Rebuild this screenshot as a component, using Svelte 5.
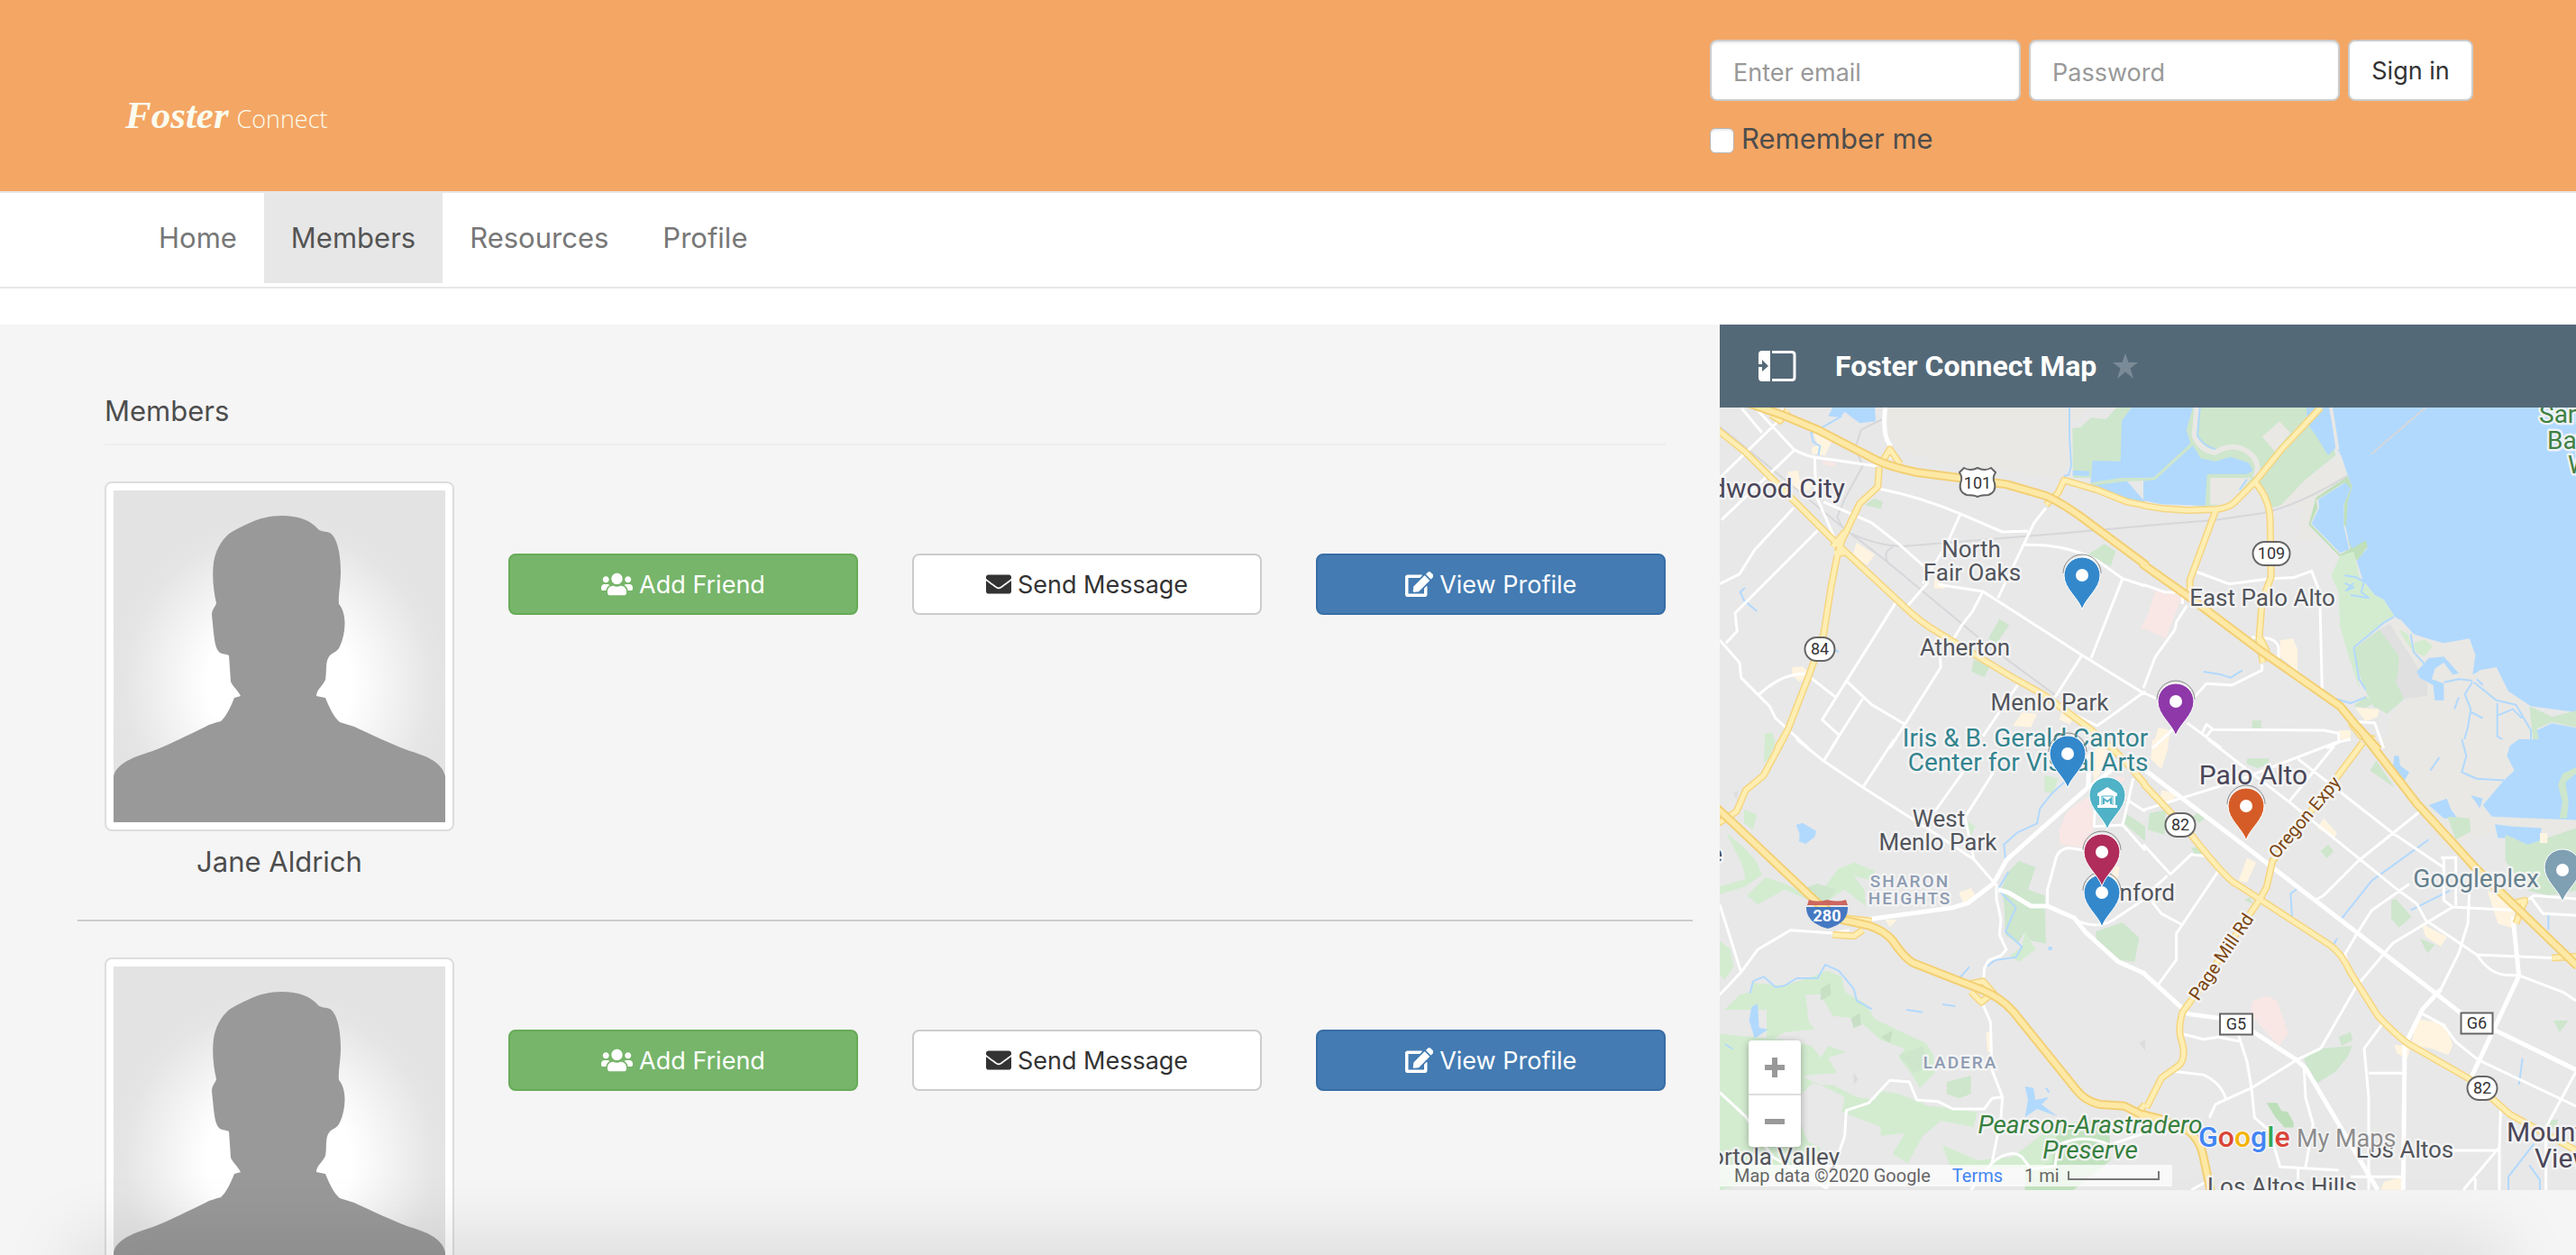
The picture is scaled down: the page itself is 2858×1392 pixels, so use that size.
<script lang="ts">
	type Tile = {
		transform: string;
		areas: { fill: string; d: string }[];
		river?: string;
		creeks: string;
		rails: string;
		minor: string;
		wide?: string;
		major: string;
		highway: string;
	};

	let email = $state('');
	let password = $state('');
	let remember = $state(false);

	const links = ['Home', 'Members', 'Resources', 'Profile'];
	const members = [{ name: 'Jane Aldrich' }, { name: '' }];

	const land = '#e9e8e4';
	const water = '#b1d9fe';
	const park = '#cde6cc';
	const grass = '#d3ecd0';
	const shop = '#fef4e0';
	const campus = '#f8e7e5';

	// The map is stored as four vector tiles, each with its own local units
	const tiles: Tile[] = [
		{
			transform: 'translate(-8 -102) scale(0.33333)',
			areas: [
				{ fill: land, d: 'M580 306H1185L1190 500 1140 540 950 510 760 490 640 450 580 400Z' },
				{ fill: park, d: 'M1198 375 1225 372 1260 340 1310 345 1345 306H1440V540H1200Z' },
				{ fill: land, d: 'M1198 306H1250L1205 350Z' },
				{ fill: water, d: 'M1395 306H1440V540H1370L1440 620V630L1380 615 1300 585 1258 560 1265 483 1358 485 1362 350Z' },
				{ fill: park, d: 'M1258 556 1360 540H1440V550L1370 552 1262 566Z' },
				{ fill: water, d: 'M1200 515 1255 518 1252 534 1198 532Z' },
				{ fill: water, d: 'M400 306H540L543 352 490 358 465 340 440 320 425 338 385 335Z' },
				{ fill: shop, d: 'M335 390 400 410 375 465 330 460V440L350 430Z' },
				{ fill: shop, d: 'M250 520 285 515 290 545 330 550 325 580 290 590 255 560Z' },
				{ fill: shop, d: 'M480 755 540 795 515 830 465 800Z' },
				{ fill: shop, d: 'M738 875 780 900 770 908H738Z' },
				{ fill: shop, d: 'M265 1170 300 1168 325 1190 290 1220 265 1195Z' },
				{ fill: shop, d: 'M1030 1320 1080 1325 1060 1370 1000 1365ZM1160 1320 1200 1340 1190 1360 1155 1345Z' },
				{ fill: campus, d: 'M365 480 412 492 405 503 370 495Z' },
				{ fill: campus, d: 'M1440 1005 1425 1040 1440 1046Z' },
				{ fill: park, d: 'M540 608 567 620 560 643 505 630ZM955 1010 988 1030 945 1090 918 1075ZM870 1145 925 1165 905 1203 862 1185ZM1305 760 1342 785 1325 835 1250 795Z' },
				{ fill: grass, d: 'M175 1390 200 1388 210 1440H172Z' }
			],
			creeks: 'M1188 306V400L1194 500 1185 530 1170 534M430 335 360 375 328 390 335 420 358 435 352 465M108 906 92 920 105 948 148 984M408 1112 420 1120',
			rails: 'M24 370 160 480 440 710 570 810 920 1100 1150 1270M460 725Q560 770 640 767L1100 730 1440 700M565 345 495 380 475 440 500 500 440 610 415 670 430 700M600 770Q560 790 590 830',
			minor: 'M95 306 165 390M150 315 270 445Q310 468 350 473L540 500 555 495M215 355 24 540M270 450 30 680M340 475 345 600 410 750M370 620 530 690 620 760 710 840 715 890 650 965M270 640 140 780 90 860 24 893M350 715 75 990 82 1050 45 1090M24 1080 90 1155 95 1205 190 1300 210 1340 320 1440M150 1265Q230 1190 310 1192L410 1270M610 955 440 1225 365 1345 420 1395M500 1275 395 1440M445 1215 530 1295 640 1360M550 575Q700 605 825 660L965 720 1050 717M825 660 780 760 700 890M750 895 900 918 1230 1130 1440 1260M900 918 865 985 830 1030 800 1080M1110 640 1070 690 950 940M1040 763Q1180 760 1280 815L1365 875 1440 900M1365 875 1260 1140M1230 1130 1140 1270M755 1110 760 1170 590 1440M1015 1230 900 1400M1130 1290 1280 1365 1330 1330 1440 1250M235 306 225 320',
			wide: 'M575 306Q565 400 590 430L598 475',
			major: 'M10 375 110 455 420 765 640 970Q690 1020 760 1060L1000 1205 1100 1260 1250 1370 1330 1440M555 505 550 570 490 625 430 750 415 800 395 900 370 1060 320 1200 250 1380 215 1440M1110 630 1150 590 1170 548 1280 580 1380 620 1440 632M195 330 225 350 250 315M560 495 590 445 625 495M400 770 440 720M405 790 440 790',
			highway: 'M120 292 230 330 350 380 540 478Q580 500 680 522L820 540 980 562 1110 600Q1160 622 1220 665L1445 832'
		},
		{
			transform: 'translate(470 -102) scale(0.33333)',
			areas: [
				{ fill: park, d: 'M0 306H600L640 465 540 545 455 635 430 640 350 600 210 640 0 600Z' },
				{ fill: water, d: 'M0 306H165L143 380 157 425 35 538 0 540Z' },
				{ fill: water, d: 'M0 551 40 546 165 432 190 475 240 485 290 470 350 490 365 515 345 528H212L206 632 60 628 0 615Z' },
				{ fill: land, d: 'M222 540H360L290 625 222 630Z' },
				{ fill: land, d: 'M395 403 453 352 490 390 437 452Z' },
				{ fill: '#e8e8e8', d: 'M372 560 430 640 460 630 560 610 580 750 640 790 620 860 500 860 222 640 300 630Z' },
				{ fill: land, d: 'M455 635 540 545 655 465 690 560 575 610 550 700 590 745 515 750 530 640Z' },
				{ fill: water, d: 'M612 306H625L645 440 660 470 680 530 695 570 680 620 672 700 690 780 740 750 745 775 710 815 730 880 770 930 800 945 835 1000 855 1015 890 1060 1000 1090 1085 1075 1105 1130 1090 1195 1175 1170 1215 1250 1290 1300 1440 1320V306Z' },
				{ fill: water, d: 'M600 306H620L640 440 615 465 575 400 550 365ZM543 306H575L543 345Z' },
				{ fill: '#bfe0bb', d: 'M695 570 680 620 675 700H667L668 630 690 575 670 555 575 615 580 640 557 693 655 795 690 775 678 740 695 775 740 748 747 768 712 815 690 790 655 803 550 697 575 605 680 535Z' },
				{ fill: water, d: 'M672 556 583 612 585 640 560 692 655 790 685 778 667 700V630L690 575Z' },
				{ fill: land, d: 'M618 306 645 445H652L634 330 630 306Z' },
				{ fill: grass, d: 'M655 800 700 785 720 870 770 930 800 945 835 1000 800 1020 700 1105 720 1240 740 1275 715 1230 685 1140 655 1035 650 920 625 865Z' },
				{ fill: '#dfe0df', d: 'M820 1025 785 1045 850 1130 840 1220 868 1275 945 1265V1225L900 1150Z' },
				{ fill: park, d: 'M785 1045 850 1130 848 1185 840 1220 868 1275 812 1325 765 1300 735 1240 715 1180 700 1110Z' },
				{ fill: land, d: 'M820 1025 855 1010 900 1060 1000 1095 1085 1075 1105 1130 1095 1200 1120 1180 1175 1170 1215 1260 1270 1290 1300 1350V1440H815L820 1330 870 1280 945 1265V1225L900 1150Z' },
				{ fill: grass, d: 'M850 1045 880 1060 900 1120 870 1080ZM900 1090 935 1078 963 1100 935 1135 905 1120Z' },
				{ fill: water, d: 'M910 1185 950 1140 1000 1135 1050 1190 1030 1195 1000 1155 970 1175 960 1210 1000 1225V1280H970L965 1230 920 1205Z' },
				{ fill: park, d: 'M1285 1300 1360 1335 1440 1315V1370L1360 1352 1310 1375 1320 1440H1300Z' },
				{ fill: water, d: 'M1310 1380 1360 1357 1440 1372V1440H1322Z' },
				{ fill: campus, d: 'M40 915 130 930 75 1075 0 1040Z' },
				{ fill: shop, d: 'M455 1080 498 1075 513 1110V1185L455 1135ZM705 1305 785 1310 780 1335 740 1350ZM50 1370 90 1380 80 1440H30ZM650 1380H690V1410H650Z' },
				{ fill: park, d: 'M362 1348H392V1373H362ZM700 1300 740 1265 765 1290 740 1305Z' }
			],
			river: 'M178 306 170 400Q190 450 240 455 300 420 350 455 395 490 372 540',
			creeks: 'M188 306 180 400Q200 435 240 445M200 1185 260 1195 290 1205 330 1180M640 1275 690 1290 740 1270M835 1002 800 1022 700 1105 718 1210 740 1245M890 1060 900 1120 945 1170M670 865 705 870 735 885 725 920 750 940 690 930M670 890 700 905 675 915 700 890M345 545 320 580M1000 1220 1050 1210 1095 1215M1095 1220 1070 1260 1090 1310 1080 1370 1060 1440M1100 1220 1175 1280 1240 1295 1290 1380 1290 1440M1178 1290V1400L1240 1440M1092 1320 1130 1340M1130 1230 1110 1210M1180 1330 1230 1310 1260 1340M1035 1310 1050 1270',
			rails: 'M0 700 240 680 400 657Q520 630 680 532M760 460 940 306',
			minor: 'M175 852 285 893 425 875 500 872 560 850 587 920 595 1250M360 1070 420 1075Q450 1085 450 1110V1140M395 1160V1180L295 1230 210 1225 165 1275M145 965 110 1020 105 1045 40 1135 0 1240M0 895 70 920 130 922V960M0 1255 45 1275M145 1355 260 1440M195 1390 210 1360 230 1375 210 1400M230 1378 600 1380 650 1390V1420L610 1440M100 1375 30 1440M680 1350 770 1355 800 1440',
			major: 'M0 632 70 643 150 648 240 645Q290 640 310 615L370 555 460 445 590 306M372 555Q420 610 422 680L425 870 395 950 385 1080 398 1155M240 650 155 880V930M390 1075 412 1120M690 1355 725 1400 770 1410',
			highway: 'M-5 825 150 935 390 1115 655 1300 700 1355 782 1445'
		},
		{
			transform: 'translate(-8 368) scale(0.33333)',
			areas: [
				{ fill: grass, d: 'M175 0H210L190 60 170 80ZM105 235 148 250 135 300 105 280ZM45 310 110 365 145 405 165 450 110 490 24 515V490L110 465 100 420Z' },
				{ fill: grass, d: 'M115 520 175 460 240 480 300 510 370 495 420 430 475 410 540 440 535 470 470 455 505 500 510 555 440 500 370 545 310 530 240 500 150 550Z' },
				{ fill: park, d: 'M305 495 350 480 410 500 380 545 330 530Z' },
				{ fill: park, d: 'M1020 405 1075 425 1050 500 1105 520 1110 680 1060 670 1040 640 1015 680 975 650 970 540 960 500 985 440Z' },
				{ fill: grass, d: 'M1040 640 1075 700 1020 740 990 720 1030 690ZM1105 120 1150 130 1135 180 1105 175ZM840 270 875 290 860 320Z' },
				{ fill: grass, d: 'M24 670 60 700 70 760 40 800 24 780Z' },
				{ fill: grass, d: 'M130 810 240 820 330 790 380 770 430 790 440 840 510 880 540 930 620 970 710 1010 735 1050 740 1110 690 1160 660 1110 620 1060 640 1030 560 1000 480 930 400 920 360 850 310 850 320 940 340 965 240 975 180 1010V900H40L90 850 130 840Z' },
				{ fill: grass, d: 'M24 980 240 1000 330 1020 360 1060 385 1020 445 1040 385 1060 415 1110 300 1120 350 1150 400 1150 480 1190 540 1200 560 1170 620 1180 720 1220 880 1240 870 1290 760 1270 700 1320 650 1410 600 1380 640 1310 560 1320V1290L430 1240 440 1190 340 1140 270 1200 300 1300 320 1340 360 1360 340 1420 24 1500Z' },
				{ fill: park, d: 'M780 1140 860 1120V1180L820 1195 780 1180ZM620 1050 700 1020 720 1090 670 1110Z' },
				{ fill: grass, d: 'M765 1350 880 1400 1000 1390 1140 1280 1320 1260 1325 1400 1200 1500H1040V1430L790 1420Z' },
				{ fill: '#c2e2bf', d: 'M1150 1290 1320 1262 1325 1400 1200 1500H1040V1430L1130 1410Z' },
				{ fill: park, d: 'M1275 640 1365 610 1420 660 1405 740 1360 735 1280 680ZM1380 250 1440 290V340L1370 280Z' },
				{ fill: '#c8dfc6', d: 'M360 830 390 810 395 850 360 870ZM460 930 490 910 495 950 470 960ZM560 990 600 970 590 1010Z' },
				{ fill: '#dcdcdc', d: 'M470 1110 485 1130 470 1150ZM1420 1010 1440 1000V1035ZM70 180 85 170 80 200Z' },
				{ fill: water, d: 'M278 285 300 278 345 305 340 325 310 348 288 340 290 315ZM130 890 150 880 155 960 185 965 140 995 122 935ZM1040 1155 1068 1160 1075 1200 1120 1190 1095 1215 1148 1255 1080 1230 1040 1258 1050 1200ZM40 1010 70 1030 65 1032 42 1018ZM1118 690 1130 690V702H1118Z' },
				{ fill: campus, d: 'M1180 240 1250 190 1275 280 1235 360 1155 350V300ZM1340 120 1375 130 1355 150Z' },
				{ fill: shop, d: 'M1260 40 1300 20 1330 60 1270 140ZM820 510 860 495 875 520 835 545ZM575 600H615L590 625ZM910 975H925L930 1040H915ZM1340 420 1355 425 1345 480 1330 450Z' }
			],
			creeks: 'M125 845 135 805 170 790 210 825 240 820 280 795 350 795 375 750 420 770 470 830 480 870 530 898M1185 130 1130 180 1090 230 1080 280 1015 310 970 350 975 400M985 440 950 500 1010 560 975 640 1030 690 1010 725 940 735 915 755M645 900 700 908M765 882 808 888M855 757 822 795M1110 1160 1120 1175',
			rails: '',
			minor: 'M280 0 370 72 500 160 720 300 870 400 940 480M415 0 370 72M605 0 500 160M840 100 740 240M935 110 840 260 870 400M945 480V530L960 600 955 650 978 700 960 720 920 735 905 760 900 825M890 860 925 940 930 1100 965 1190 960 1260 930 1410 860 1500M1115 555V500L1145 390Q1160 360 1190 362L1240 370M1205 600Q1290 640 1350 590L1440 530M24 850 95 775 150 700 260 635 400 645 455 635M24 550 95 775M24 1175 110 1255 200 1390 380 1495M380 1495 440 1320 445 1235 520 1210 590 1135 655 1140 680 1200 750 1205 800 1230 905 1230 930 1195 965 1190M930 1410Q990 1360 1030 1390L1060 1430 1140 1420 1150 1350Q1240 1310 1320 1350L1440 1310M1275 180 1270 290 1365 285 1440 370M1400 130 1385 200 1365 285M1385 205 1440 240',
			wide: 'M475 605 800 560 850 545 935 480 980 400 1250 160 1255 50M950 500 985 510 1060 555 1115 555 1205 595 1240 640 1350 740 1440 780M1255 160 1380 60',
			major: 'M240-10 170 120 110 170 80 240 50 260 10 285M1330 30 1370 70 1440 150M440 595 530 605M400 650 470 655 500 635M850 815 900 805 940 850M860 840 895 875 925 850M1400 1260 1440 1215',
			highway: 'M10 225 70 280 350 545 430 600 520 620Q570 635 600 670 640 730 670 745L900 835Q960 860 1000 905L1210 1165Q1240 1205 1290 1215L1370 1220 1445 1258'
		},
		{
			transform: 'translate(470 368) scale(0.33333 0.36483)',
			areas: [
				{ fill: land, d: 'M770 0H1440V290L1200 270 1000 330 900 200Z' },
				{ fill: water, d: 'M1220 20 1250 0H1440V245L1160 235 1130 200 1200 125 1235 95 1210 50Z' },
				{ fill: water, d: 'M1170 258 1230 265 1325 270 1320 310 1255 338 1235 300 1180 300ZM835 50 850 50 855 80 885 100 870 125 830 90ZM950 200 1010 180 1025 215 1050 245 1000 240ZM1090 170 1130 180 1120 210Z' },
				{ fill: park, d: 'M1205 290 1280 320 1440 270V460L1350 475 1280 460 1205 370ZM1440 85 1395 105 1380 140 1395 190 1385 240H1410L1415 190 1405 130 1440 105Z' },
				{ fill: park, d: 'M345 58H420L415 75 380 88 345 75ZM20 225 75 215 70 290 15 275ZM775 65 835 145 755 95ZM165 235 190 215 210 235 185 255ZM160 330 190 325 210 350H170ZM590 340 615 320 633 340 612 362ZM825 490 840 485 893 540 850 572 825 545ZM535 970 590 940 695 932 680 965 640 1010 580 1045 550 1010ZM650 905 690 890 697 915 660 932ZM1365 855 1415 855 1385 890ZM920 605 970 625 945 650ZM1012 235 1085 240 1090 280 1040 305ZM335 490 355 480 365 500ZM1340 1160 1380 1155 1370 1190Z' },
				{ fill: '#bcdfba', d: 'M410 1105H445L460 1130 480 1132 500 1165V1180H470L440 1150Z' },
				{ fill: campus, d: 'M365 795 410 780 445 795 483 895 450 932 355 835Z' },
				{ fill: shop, d: 'M910 850 1005 865 1030 930 1015 960 960 940 890 930ZM835 930H890L880 970 845 955ZM925 560 1010 600 990 630 940 600ZM1145 460 1240 500 1230 575 1180 560ZM600 240 645 285 635 300 580 270ZM345 360 375 375 345 435 317 430ZM30 0 85 20 60 90 25 60ZM60 155 115 165 90 195 55 185ZM800 1345 865 1330V1370H790ZM1320 285H1345V315H1320Z' }
			],
			creeks: 'M510 455 490 470 495 540M950 305 760 430 660 545M1020 460 890 520M645 605 630 630M1262 970 1250 1050M1300 1230 1240 1300 1215 1330V1370M1285 1295 1320 1340V1370M1060 0 1075 50 1060 100 1110 120 1200 125M985 55 955 95M1348 530V580',
			rails: '',
			minor: 'M215 0 485 190 850 460 910 500 940 550 1110 655 1360 665M0 215 300 130 640 10 690 0M635 20 485 190M515 60 830 285 1000 390M920 220 715 370 600 475 570 490M885 440 760 520 705 600 670 655 685 690M210 355 160 350 90 410 0 320M0 480 80 415M0 460 60 530 125 562M250 400 110 590V670L50 745M125 895 200 912 250 905 320 918M315 895 345 980 360 1060 370 1150 420 1190 455 1300 650 1310M105 1010 200 1020Q260 1045 275 1095M220 1150 240 1110 360 1060 510 975 590 940 710 750 830 620 1030 510 1240 520M1000 360V490L1030 510M1040 355V505M990 360H1040M1085 470 1080 560 1050 650 990 760M800 860 735 940 750 1090V1370M750 1015H865M535 1000 540 1090 565 1170 540 1300M930 835 1000 870 1040 920 1115 975 1440 1115M1110 655Q1150 710 1200 716L1250 718 1400 770 1440 795M1440 1010 1340 1180V1370M1190 1110 1185 1240 1065 1370M1185 1240V1370M1185 1250H1030M1105 1335V1370M1290 480 1330 530 1440 535M1240 560 1260 500 1300 475 1440 485M160 1370 220 1340M690 1330H865M515 1305V1340',
			wide: 'M0 90 360 340 430 390 970 770 1060 835 1440 1005M0 710 150 835 270 850 350 880 510 975 540 1000 780 1370M990 760 930 820 870 930 865 1370M1230 540 1250 720 1090 1030',
			major: 'M0 135 150 280Q280 430 310 440L620 625Q660 650 690 710L780 840Q830 890 880 925L1090 1035 1220 1140 1440 1250M730 10 640 120 430 370 410 450 385 490 170 780 130 830Q115 880 125 910 145 965 120 990L60 1030 10 1120M1100 390 1080 370M1225 500 1270 490 1240 560M1360 665 1440 660',
			highway: 'M735-12 910 195 1110 395 1445 690M-5 1140 60 1155 150 1190Q190 1220 200 1270L225 1378'
		}
	];

	const labels = [
		{ text: 'Redwood City', x: 139, y: 100, cls: 'city', anchor: 'end' },
		{ text: 'Palo Alto', x: 592, y: 418, cls: 'city', anchor: 'middle' },
		{ text: 'Mountain', x: 873, y: 814, cls: 'city', anchor: 'start' },
		{ text: 'View', x: 904, y: 843, cls: 'city', anchor: 'start' },
		{ text: 'North', x: 279, y: 166, cls: 'town', anchor: 'middle' },
		{ text: 'Fair Oaks', x: 280, y: 192, cls: 'town', anchor: 'middle' },
		{ text: 'Atherton', x: 272, y: 275, cls: 'town', anchor: 'middle' },
		{ text: 'Menlo Park', x: 366, y: 336, cls: 'town', anchor: 'middle' },
		{ text: 'East Palo Alto', x: 602, y: 220, cls: 'town', anchor: 'middle' },
		{ text: 'West', x: 243, y: 465, cls: 'town', anchor: 'middle' },
		{ text: 'Menlo Park', x: 242, y: 491, cls: 'town', anchor: 'middle' },
		{ text: 'Woodside', x: 3, y: 504, cls: 'town', anchor: 'end' },
		{ text: 'Stanford', x: 505, y: 547, cls: 'town', anchor: 'end' },
		{ text: 'Portola Valley', x: 133, y: 840, cls: 'town', anchor: 'end' },
		{ text: 'Los Altos', x: 760, y: 832, cls: 'town', anchor: 'middle' },
		{ text: 'Los Altos Hills', x: 624, y: 873, cls: 'town', anchor: 'middle' },
		{ text: 'SHARON', x: 211, y: 532, cls: 'area', anchor: 'middle' },
		{ text: 'HEIGHTS', x: 211, y: 551, cls: 'area', anchor: 'middle' },
		{ text: 'LADERA', x: 267, y: 733, cls: 'area', anchor: 'middle' },
		{ text: 'Iris & B. Gerald Cantor', x: 339, y: 376, cls: 'museum', anchor: 'middle' },
		{ text: 'Center for Visual Arts', x: 342, y: 403, cls: 'museum', anchor: 'middle' },
		{ text: 'Googleplex', x: 839, y: 532, cls: 'office', anchor: 'middle' },
		{ text: 'Pearson-Arastradero', x: 411, y: 805, cls: 'preserve', anchor: 'middle' },
		{ text: 'Preserve', x: 411, y: 833, cls: 'preserve', anchor: 'middle' },
		{ text: 'San', x: 909, y: 17, cls: 'refuge', anchor: 'start' },
		{ text: 'Bay', x: 918, y: 46, cls: 'refuge', anchor: 'start' },
		{ text: 'W', x: 941, y: 73, cls: 'refuge', anchor: 'start' }
	];

	const routes = [
		{ text: '84', x: 111, y: 268, w: 33, h: 26, rx: 13 },
		{ text: '109', x: 612, y: 162, w: 41, h: 26, rx: 13 },
		{ text: '82', x: 511, y: 463, w: 33, h: 26, rx: 13 },
		{ text: '82', x: 846, y: 755, w: 33, h: 26, rx: 13 },
		{ text: 'G5', x: 573, y: 684, w: 36, h: 23, rx: 0 },
		{ text: 'G6', x: 840, y: 683, w: 35, h: 23, rx: 0 }
	];

	const pins = [
		{ x: 402, y: 224, color: '#3388cc' },
		{ x: 386, y: 422, color: '#3388cc' },
		{ x: 506, y: 364, color: '#8e38a9' },
		{ x: 584, y: 480, color: '#d65c27' },
		{ x: 424, y: 576, color: '#3388cc' },
		{ x: 424, y: 531, color: '#b02c5a' }
	];

	const pinPath = 'M0 0C-4-13-20-23-20-38A20 20 0 0 1 20-38C20-23 4-13 0 0Z';
</script>

{#snippet avatar()}
	<svg class="avatar" viewBox="0 0 368 368" role="img" aria-label="Profile picture">
		<defs>
			<radialGradient id="glow" cx="184" cy="215" r="190" gradientUnits="userSpaceOnUse">
				<stop offset="0" stop-color="#fff" />
				<stop offset="0.42" stop-color="#fff" />
				<stop offset="0.9" stop-color="#e5e5e5" />
				<stop offset="1" stop-color="#e3e3e3" />
			</radialGradient>
		</defs>
		<rect width="368" height="368" fill="url(#glow)" />
		<path
			fill="#999"
			d="M187 28C173 28 161 31 151 36C142 40 134 44 128 48C119 56 113 67 111 80C109 95 111 112 114 125C113 129 109 132 109 138L111 158C112 166 113 176 118 180C121 182 125 181 128 183L130 212C132 217 138 222 141 228L134 230C130 240 125 251 119 256C112 258 107 259 102 262C83 271 64 281 46 288C29 294 4 300 0 317V368H368V317C364 300 345 294 326 288C307 281 285 270 267 262L251 257C244 251 239 240 235 230L225 228C225 221 232 217 235 210C237 200 234 188 241 182C244 180 249 178 251 173C258 158 259 136 250 126C249 117 252 105 252 90C252 73 249 53 240 47C236 45 230 46 227 43C219 33 204 28 187 28Z"
		/>
	</svg>
{/snippet}

<div class="page">
	<header class="top">
		<a class="brand" href="/"><span class="script">Foster</span> <span class="thin">Connect</span></a>
		<form class="login" onsubmit={(e) => e.preventDefault()}>
			<div class="fields">
				<input class="field" type="email" placeholder="Enter email" aria-label="Email" bind:value={email} />
				<input class="field" type="password" placeholder="Password" aria-label="Password" bind:value={password} />
				<button class="sign-in" type="submit">Sign in</button>
			</div>
			<label class="remember">
				<input type="checkbox" bind:checked={remember} />
				Remember me
			</label>
		</form>
	</header>

	<nav class="menu">
		<ul>
			{#each links as link}
				<li><a href="/{link.toLowerCase()}" class:active={link === 'Members'}>{link}</a></li>
			{/each}
		</ul>
	</nav>

	<main class="content">
		<section class="members">
			<h1>Members</h1>
			{#each members as member}
				<div class="member">
					<figure>
						<div class="thumbnail">{@render avatar()}</div>
						{#if member.name}
							<figcaption>{member.name}</figcaption>
						{/if}
					</figure>
					<button class="btn success">
						<svg class="users" viewBox="0 0 640 512" aria-hidden="true"><path d="M96 224c35.3 0 64-28.7 64-64s-28.7-64-64-64-64 28.7-64 64 28.7 64 64 64zm448 0c35.3 0 64-28.7 64-64s-28.7-64-64-64-64 28.7-64 64 28.7 64 64 64zm32 32h-64c-17.6 0-33.5 7.1-45.1 18.6 40.3 22.1 68.9 62 75.1 109.4h66c17.7 0 32-14.3 32-32v-32c0-35.3-28.7-64-64-64zm-256 0c61.9 0 112-50.1 112-112S381.9 32 320 32 208 82.1 208 144s50.1 112 112 112zm76.8 32h-8.3c-20.8 10-43.9 16-68.5 16s-47.6-6-68.5-16h-8.3C179.6 288 128 339.6 128 403.2V432c0 26.5 21.5 48 48 48h288c26.5 0 48-21.5 48-48v-28.8c0-63.6-51.6-115.2-115.2-115.2zm-223.7-13.4C161.5 263.1 145.6 256 128 256H64c-35.3 0-64 28.7-64 64v32c0 17.7 14.3 32 32 32h65.9c6.3-47.4 34.9-87.3 75.2-109.4z" /></svg>
						Add Friend
					</button>
					<button class="btn">
						<svg class="envelope" viewBox="0 0 512 512" aria-hidden="true"><path d="M502.3 190.8c3.9-3.1 9.7-.2 9.7 4.7V400c0 26.5-21.5 48-48 48H48c-26.5 0-48-21.5-48-48V195.6c0-5 5.7-7.8 9.7-4.7 22.4 17.4 52.1 39.5 154.1 113.6 21.1 15.4 56.7 47.8 92.2 47.6 35.7.3 72-32.8 92.3-47.6 102-74.1 131.6-96.3 154-113.7zM256 320c23.2.4 56.6-29.2 73.4-41.4 132.7-96.3 142.8-104.7 173.4-128.7 5.8-4.5 9.2-11.5 9.2-18.9v-19c0-26.5-21.5-48-48-48H48c-26.5 0-48 21.5-48 48v19c0 7.4 3.4 14.3 9.2 18.9 30.6 23.9 40.7 32.4 173.4 128.7 16.8 12.2 50.2 41.8 73.4 41.4z" /></svg>
						Send Message
					</button>
					<button class="btn primary">
						<svg class="edit" viewBox="0 0 576 512" aria-hidden="true"><path d="M402.6 83.2l90.2 90.2c3.8 3.8 3.8 10 0 13.8L274.4 405.6l-92.8 10.3c-12.4 1.4-22.9-9.1-21.5-21.5l10.3-92.8L388.8 83.2c3.8-3.8 10-3.8 13.8 0zm162-22.9l-48.8-48.8c-15.2-15.2-39.9-15.2-55.2 0l-35.4 35.4c-3.8 3.8-3.8 10 0 13.8l90.2 90.2c3.8 3.8 10 3.8 13.8 0l35.4-35.4c15.2-15.3 15.2-40 0-55.2zM384 346.2V448H64V128h229.8c3.2 0 6.2-1.3 8.5-3.5l40-40c7.6-7.6 2.2-20.5-8.5-20.5H48C21.5 64 0 85.5 0 112v352c0 26.5 21.5 48 48 48h352c26.5 0 48-21.5 48-48V306.2c0-10.7-12.9-16-20.5-8.5l-40 40c-2.2 2.3-3.5 5.3-3.5 8.5z" /></svg>
						View Profile
					</button>
				</div>
			{/each}
		</section>

		<section class="map">
			<div class="map-header">
				<button class="legend-toggle" aria-label="Toggle legend">
					<svg viewBox="0 0 42 36" aria-hidden="true">
						<path fill="#fff" d="M4 1H13V35H4Q0 35 0 31V19H4V24L11 18 4 11V16H0V5Q0 1 4 1Z" />
						<path fill="none" stroke="#fff" stroke-width="3" d="M15 2.5H37Q40 2.5 40 5.5V30.5Q40 33.5 37 33.5H15" />
					</svg>
				</button>
				<h2>Foster Connect Map</h2>
				<svg class="star" viewBox="0 0 30 30" aria-hidden="true">
					<path d="M15 1 18.5 11H29L20.5 17.5 24 29 15 21.5 6 29 9.5 17.5 1 11H11.5Z" />
				</svg>
			</div>
			<div class="canvas">
				<svg class="tiles" viewBox="0 0 950 868" preserveAspectRatio="xMinYMin slice">
					<rect width="950" height="868" fill="#e8e8e8" />
					{#each tiles as tile}
						<g transform={tile.transform}>
							{#each tile.areas as area}
								<path d={area.d} fill={area.fill} />
							{/each}
							{#if tile.river}<path class="line river" d={tile.river} />{/if}
							<path class="line creek" d={tile.creeks} />
							<path class="line rail" d={tile.rails} />
						</g>
					{/each}
					{#each tiles as tile}
						<g transform={tile.transform}>
							<path class="line minor" d={tile.minor} />
							{#if tile.wide}<path class="line wide" d={tile.wide} />{/if}
						</g>
					{/each}
					{#each tiles as tile}
						<g transform={tile.transform}><path class="line major-edge" d={tile.major} /></g>
					{/each}
					{#each tiles as tile}
						<g transform={tile.transform}><path class="line major" d={tile.major} /></g>
					{/each}
					{#each tiles as tile}
						<g transform={tile.transform}><path class="line highway-edge" d={tile.highway} /></g>
					{/each}
					{#each tiles as tile}
						<g transform={tile.transform}><path class="line highway" d={tile.highway} /></g>
					{/each}

					{#each labels as label}
						<text class="label {label.cls}" x={label.x} y={label.y} text-anchor={label.anchor}>{label.text}</text>
					{/each}
					<text class="label street" transform="translate(654 459) rotate(-50)" text-anchor="middle">Oregon Expy</text>
					<text class="label street" transform="translate(562 613) rotate(-56)" text-anchor="middle">Page Mill Rd</text>

					{#each routes as route}
						<rect class="route" x={route.x - route.w / 2} y={route.y - route.h / 2} width={route.w} height={route.h} rx={route.rx} />
						<text class="route-no" x={route.x} y={route.y + 6} text-anchor="middle">{route.text}</text>
					{/each}
					<path class="route" d="M271 67Q278 71 286 67Q294 71 301 67L306 72Q302 78 305 84Q307 94 298 97Q290 97 286 99Q282 97 274 97Q265 94 267 84Q270 78 266 72Z" />
					<text class="route-no" x="286" y="90" text-anchor="middle">101</text>
					<path fill="#4478c2" d="M96 554H142Q143 572 120 578Q96 572 96 554Z" />
					<path fill="#cc6660" d="M99 546Q109 549 119 546Q130 549 140 546L142 552H97Z" />
					<text class="interstate" x="119" y="570" text-anchor="middle">280</text>

					<g transform="translate(430 468)">
						<path fill="#4fb2c6" stroke="#fff" d={pinPath} />
						<path fill="#fff" d="M0-47 11-40V-37H9V-27H11V-24H-11V-27H-9V-37H-11V-40Z" />
						<path fill="none" stroke="#4fb2c6" stroke-width="1" d="M-6-27V-37H6V-27" />
						<path fill="none" stroke="#4fb2c6" stroke-width="2" d="M-4-28V-34L0-31 4-34V-28" />
					</g>
					<g transform="translate(935 548)">
						<path fill="#7f9fb2" stroke="#fff" d={pinPath} />
						<circle cy="-35" r="7" fill="#fff" />
					</g>
					{#each pins as pin}
						<g transform="translate({pin.x} {pin.y})">
							<path fill="none" stroke="#888" stroke-width="1" d="M-21-40A21 21 0 0 1 21-40" />
							<path fill={pin.color} stroke="#fff" d={pinPath} />
							<circle cy="-38" r="7" fill="#fff" />
						</g>
					{/each}

					<text class="google" x="531" y="820"
						><tspan fill="#4285f4">G</tspan><tspan fill="#db4437">o</tspan><tspan fill="#f4b400">o</tspan><tspan fill="#4285f4">g</tspan><tspan fill="#34a853">l</tspan><tspan fill="#db4437">e</tspan></text
					>
					<text class="my-maps" x="640" y="820">My Maps</text>
				</svg>
				<div class="zoom">
					<button aria-label="Zoom in"><svg viewBox="0 0 22 22"><path d="M8 0H14V8H22V14H14V22H8V14H0V8H8Z" /></svg></button>
					<button aria-label="Zoom out"><svg viewBox="0 0 22 22"><path d="M0 8H22V14H0Z" /></svg></button>
				</div>
				<div class="credits">
					<span>Map data ©2020 Google</span>
					<a href="/terms">Terms</a>
					<span class="distance">1 mi <i></i></span>
				</div>
			</div>
		</section>
	</main>
	<div class="fade"></div>
</div>

<style>
	:global(body) {
		margin: 0;
		background: #fff;
	}

	.page {
		position: relative;
		height: 100vh;
		overflow: hidden;
		font-family: Inter, sans-serif;
		font-size: 31px;
		color: #4d4d4d;
	}

	.page *,
	.page *::before {
		box-sizing: border-box;
	}

	button,
	input {
		font-family: inherit;
		margin: 0;
	}

	.top {
		display: flex;
		justify-content: space-between;
		padding: 44px 114px 38px 139px;
		background: #f4a664;
	}

	.brand {
		align-self: center;
		padding-top: 36px;
		color: #fbfbee;
		text-decoration: none;
		white-space: nowrap;
	}

	.script {
		font-family: 'Liberation Serif', serif;
		font-size: 43px;
		font-style: italic;
		font-weight: 700;
	}

	.thin {
		font-family: 'Open Sans', sans-serif;
		font-size: 27px;
		font-weight: 300;
	}

	.login {
		display: flex;
		flex-direction: column;
		gap: 22px;
	}

	.fields {
		display: flex;
		gap: 9px;
	}

	.field {
		width: 345px;
		height: 68px;
		padding: 4px 24px 0;
		border: 2px solid #ccc;
		border-radius: 8px;
		background: #fff;
		box-shadow: inset 0 2px 2px rgba(0, 0, 0, 0.08);
		font-size: 27px;
		color: #555;
	}

	.field::placeholder {
		color: #999;
		opacity: 1;
	}

	.sign-in {
		height: 68px;
		width: 139px;
		border: 2px solid #ccc;
		border-radius: 8px;
		background: #fff;
		font-size: 27px;
		color: #333;
	}

	.remember {
		display: flex;
		align-items: center;
		gap: 8px;
		line-height: 40px;
	}

	.remember input {
		appearance: none;
		width: 27px;
		height: 28px;
		margin-top: 4px;
		border: 1px solid #b5b5b5;
		border-radius: 6px;
		background: #fff;
		box-shadow: inset 0 2px 2px rgba(0, 0, 0, 0.08);
	}

	.menu {
		height: 108px;
		border-top: 2px solid #e7e7e7;
		border-bottom: 2px solid #e7e7e7;
	}

	.menu ul {
		display: flex;
		margin: 0;
		padding: 0 0 0 146px;
		list-style: none;
	}

	.menu a {
		display: block;
		padding: 0 30px;
		line-height: 100px;
		color: #777;
		text-decoration: none;
	}

	.menu a.active {
		background: #e7e7e7;
		color: #555;
	}

	.content {
		display: grid;
		grid-template-columns: minmax(0, 1fr) 950px;
		margin-top: 40px;
		background: #f5f5f5;
	}

	.members {
		padding: 76px 30px 0 86px;
	}

	h1 {
		margin: 0 30px 40px;
		padding-bottom: 16px;
		border-bottom: 2px solid #eee;
		font-size: 31px;
		font-weight: 400;
		line-height: 40px;
	}

	.member {
		display: grid;
		grid-template-columns: repeat(4, 1fr);
		gap: 60px;
		align-items: start;
		margin-bottom: 40px;
		padding: 0 30px 44px;
		border-bottom: 2px solid #ccc;
	}

	figure {
		margin: 0;
	}

	.thumbnail {
		padding: 8px;
		border: 2px solid #ddd;
		border-radius: 8px;
		background: #fff;
	}

	.avatar {
		display: block;
		width: 100%;
	}

	figcaption {
		padding-top: 14px;
		line-height: 40px;
		text-align: center;
	}

	.btn {
		display: flex;
		align-items: center;
		justify-content: center;
		gap: 7px;
		height: 68px;
		margin-top: 80px;
		border: 2px solid #ccc;
		border-radius: 8px;
		background: #fff;
		color: #333;
		font-size: 27px;
	}

	.btn svg {
		height: 28px;
		fill: currentColor;
	}

	.btn.success {
		border-color: #67ab57;
		background: #76b56a;
		color: #fff;
	}

	.btn.primary {
		border-color: #386da6;
		background: #437bb2;
		color: #fff;
	}

	.map {
		font-family: Roboto, sans-serif;
	}

	.map-header {
		display: flex;
		align-items: center;
		height: 92px;
		padding-left: 43px;
		background: #546978;
	}

	.legend-toggle {
		width: 42px;
		height: 36px;
		padding: 0;
		border: 0;
		background: none;
	}

	.legend-toggle svg {
		display: block;
	}

	h2 {
		margin: 0 17px 0 43px;
		color: #fff;
		font-size: 32px;
		font-weight: 700;
	}

	.star {
		width: 30px;
		height: 30px;
		fill: #7a8b97;
	}

	.canvas {
		position: relative;
		height: 868px;
		overflow: hidden;
	}

	.tiles {
		display: block;
		width: 100%;
		height: 100%;
	}

	.line {
		fill: none;
		stroke-linejoin: round;
		vector-effect: non-scaling-stroke;
	}

	.river {
		stroke: #e9e8e4;
		stroke-width: 6px;
	}

	.creek {
		stroke: #b1d9fe;
		stroke-width: 2px;
	}

	.rail {
		stroke: #d6d7da;
		stroke-width: 2px;
	}

	.minor {
		stroke: #fff;
		stroke-width: 3px;
	}

	.wide {
		stroke: #fff;
		stroke-width: 5px;
	}

	.major-edge {
		stroke: #f5d582;
		stroke-width: 8px;
	}

	.major {
		stroke: #feeeb2;
		stroke-width: 5px;
	}

	.highway-edge {
		stroke: #f3cf74;
		stroke-width: 10px;
	}

	.highway {
		stroke: #fde9a5;
		stroke-width: 6px;
	}

	.label {
		font-size: 26px;
		fill: #52555c;
		stroke: #f5f5f5;
		stroke-width: 5px;
		stroke-linejoin: round;
		stroke-opacity: 0.9;
		paint-order: stroke;
	}

	.city {
		font-size: 30px;
		fill: #4a4659;
	}

	.area {
		font-size: 19px;
		font-weight: 500;
		letter-spacing: 2px;
		fill: #8d9bb2;
	}

	.museum {
		font-size: 28px;
		fill: #33848f;
	}

	.office {
		font-size: 28px;
		fill: #64808e;
	}

	.preserve {
		font-size: 28px;
		font-style: italic;
		fill: #37803f;
	}

	.refuge {
		font-size: 28px;
		fill: #3f8143;
	}

	.street {
		font-size: 20px;
		fill: #7a4512;
	}

	.route {
		fill: #fff;
		stroke: #666;
		stroke-width: 2px;
	}

	.route-no {
		font-size: 18px;
		fill: #333;
	}

	.interstate {
		font-size: 18px;
		font-weight: 700;
		fill: #fff;
	}

	.google,
	.my-maps {
		stroke: #f5f5f5;
		stroke-width: 3px;
		paint-order: stroke;
	}

	.google {
		font-size: 32px;
		font-weight: 500;
	}

	.my-maps {
		font-size: 27px;
		fill: #8c8c8c;
	}

	.zoom {
		position: absolute;
		left: 32px;
		bottom: 48px;
		width: 58px;
		border-radius: 4px;
		background: #fff;
		box-shadow: 0 2px 8px rgba(0, 0, 0, 0.3);
	}

	.zoom button {
		display: flex;
		align-items: center;
		justify-content: center;
		width: 58px;
		height: 59px;
		padding: 0;
		border: 0;
		background: none;
	}

	.zoom button + button {
		border-top: 2px solid #ddd;
	}

	.zoom svg {
		width: 22px;
		fill: #999;
	}

	.credits {
		position: absolute;
		left: 0;
		bottom: 4px;
		display: flex;
		gap: 24px;
		padding: 0 14px 0 16px;
		background: rgba(255, 255, 255, 0.75);
		font-size: 20px;
		line-height: 24px;
		color: #666;
	}

	.credits a {
		color: #4285f4;
		text-decoration: none;
	}

	.distance {
		display: flex;
		align-items: center;
		gap: 9px;
	}

	.distance i {
		width: 102px;
		height: 10px;
		border: 2px solid #777;
		border-top: 0;
	}

	.fade {
		position: absolute;
		right: 100px;
		bottom: -20px;
		left: 100px;
		height: 10px;
		box-shadow: 0 0 80px 20px rgba(0, 0, 0, 0.15);
	}
</style>
